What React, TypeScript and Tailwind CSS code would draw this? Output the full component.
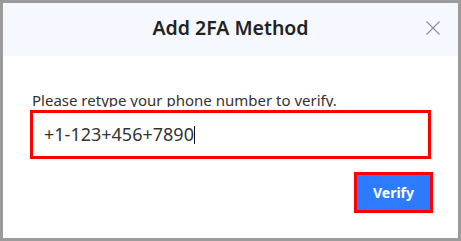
export default function App() {
  return (
    <div className="w-[461px] h-[241px] border-[3px] border-[#9b9b9b] bg-white flex flex-col" style={{ fontFamily: '"Noto Sans", "Open Sans", sans-serif' }}>
      {/* Header */}
      <div className="h-[53px] bg-[#f5f9ff] relative flex items-center justify-center pb-[3px] shrink-0">
        <span className="text-[19.5px] font-semibold text-[#222] leading-none">Add 2FA Method</span>
        <svg className="absolute right-[18px] top-[18px]" width="14" height="14" viewBox="0 0 14 14" fill="none">
          <path d="M0.5 0.5L13.5 13.5M13.5 0.5L0.5 13.5" stroke="#8a8f96" strokeWidth="1.1" />
        </svg>
      </div>

      {/* Body */}
      <div className="flex flex-col px-[27px] pt-[34px]">
        <div className="text-[15px] text-[#333] leading-[20px] pl-[2px] whitespace-nowrap">Please retype your phone number to verify.</div>
        <div className="relative mt-[-3px] pt-[3px] bg-white">
          <div className="h-[49px] border-[3px] border-[#ff0000] bg-white flex items-center pl-[11px]">
            <span className="text-[18px] text-[#333]">+1-123+456+7890</span>
            <span className="w-px h-[18px] bg-[#111]" />
          </div>
        </div>
        <div className="flex justify-end mt-[13px]">
          <button className="w-[79px] h-[41px] border-[3px] border-[#ff0000] bg-[#2f7bff] text-white text-[14px] font-bold flex items-center justify-center mr-[-2px]">
            Verify
          </button>
        </div>
      </div>
    </div>
  );
}
